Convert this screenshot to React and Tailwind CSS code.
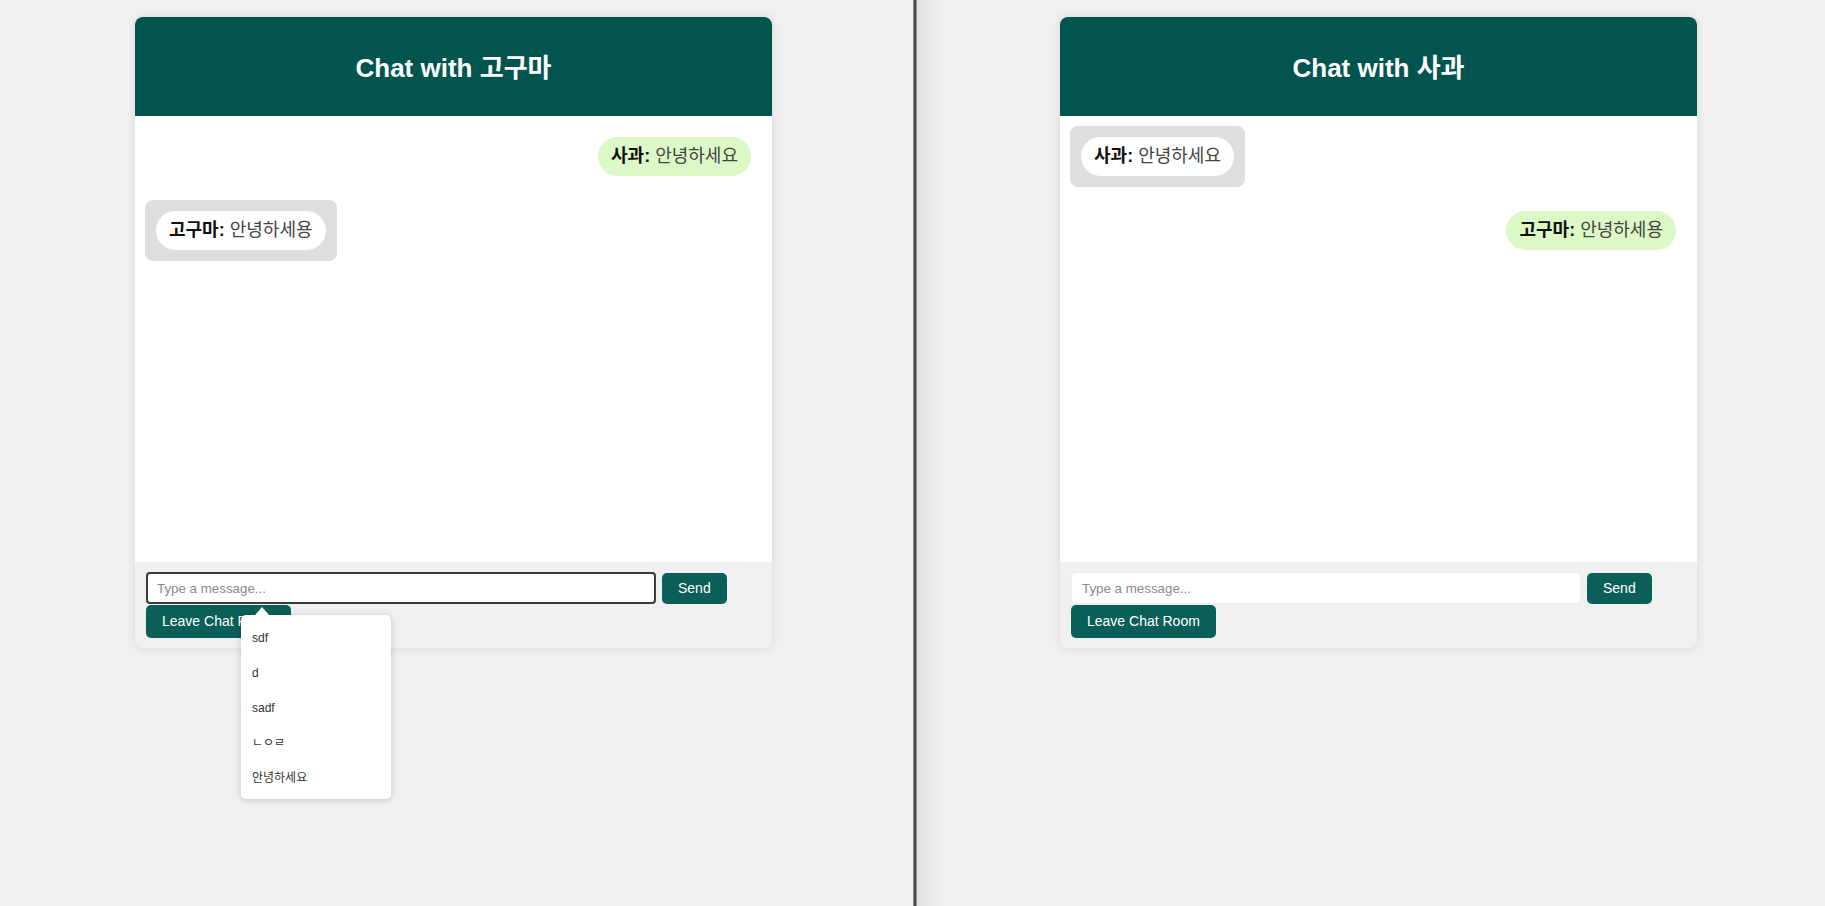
import React from 'react';

const suggestions = ['sdf', 'd', 'sadf', 'ㄴㅇㄹ', '안녕하세요'];

const Message = ({ sender, text, mine }) => {
  if (mine) {
    return (
      <div className="self-end p-[11px] mb-[13px]">
        <div className="rounded-full bg-[#dcf8c6] px-[13px] py-[9px] text-[18px] leading-[21px] text-[#444]">
          <span className="font-bold text-[#111]">{sender}:</span> {text}
        </div>
      </div>
    );
  }
  return (
    <div className="self-start rounded-[8px] bg-[#dedede] p-[11px] mb-[13px]">
      <div className="rounded-full bg-white px-[13px] py-[9px] text-[18px] leading-[21px] text-[#444]">
        <span className="font-bold text-[#111]">{sender}:</span> {text}
      </div>
    </div>
  );
};

const Suggestions = () => (
  <div className="absolute left-[95px] top-[43px] z-10 w-[150px] rounded-[5px] bg-white pt-[5px] pb-[4px] shadow-[0_1px_6px_rgba(0,0,0,0.2)]">
    <div className="absolute -top-[8px] left-[14px] h-0 w-0 border-x-[7px] border-b-[8px] border-x-transparent border-b-white"></div>
    {suggestions.map((s) => (
      <div key={s} className="flex h-[35px] items-center px-[11px] text-[12px] text-[#333]">
        {s}
      </div>
    ))}
  </div>
);

const ChatWindow = ({ partner, messages, me, focused }) => {
  return (
    <div className="w-[637px] rounded-[8px] shadow-[0_0_10px_rgba(0,0,0,0.1)]">
      <div className="flex h-[99px] items-center justify-center rounded-t-[8px] bg-[#02554f] pt-[4px] text-[26px] font-bold text-white">
        Chat with {partner}
      </div>
      <div className="flex h-[446px] flex-col bg-white p-[10px]">
        {messages.map((m, i) => (
          <Message key={i} sender={m.sender} text={m.text} mine={m.sender === me} />
        ))}
      </div>
      <div className="rounded-b-[8px] bg-[#f0f0f0] pl-[11px] pt-[10px] pb-[10px]">
        <div className="flex items-center gap-[6px]">
          <div className="relative">
            <input
              className={
                focused
                  ? 'h-[32px] w-[510px] rounded-[4px] border-2 border-[#3a3a3a] bg-white px-[9px] text-[13.33px] outline-none placeholder:text-[#8a8a8a]'
                  : 'h-[32px] w-[510px] rounded-[4px] border border-[#ececec] bg-white px-[10px] text-[13.33px] outline-none placeholder:text-[#8a8a8a]'
              }
              placeholder="Type a message..."
            />
            {focused && <Suggestions />}
          </div>
          <button className="h-[31px] rounded-[5px] bg-[#0a5f58] px-[16px] text-[14px] text-white">
            Send
          </button>
        </div>
        <button className="mt-[1px] h-[33px] rounded-[5px] bg-[#0a5f58] px-[16px] text-[14px] text-white">
          Leave Chat Room
        </button>
      </div>
    </div>
  );
};

const App = () => {
  const history = [
    { sender: '사과', text: '안녕하세요' },
    { sender: '고구마', text: '안녕하세용' },
  ];

  return (
    <div className="flex h-[906px] w-full overflow-hidden bg-[#f0f0f0] font-['Liberation_Sans','Noto_Sans_CJK_KR',sans-serif]">
      <div className="w-[913px] shrink-0 pl-[135px] pt-[17px]">
        <ChatWindow partner="고구마" me="사과" messages={history} focused />
      </div>
      <div className="w-[4px] shrink-0 border-x border-[#8a8a8a] bg-[#4a4a4a]"></div>
      <div className="flex-1 bg-[linear-gradient(to_right,#e1e1e1,#f0f0f0_24px)] pl-[143px] pt-[17px]">
        <ChatWindow partner="사과" me="고구마" messages={history} />
      </div>
    </div>
  );
};

export default App;
